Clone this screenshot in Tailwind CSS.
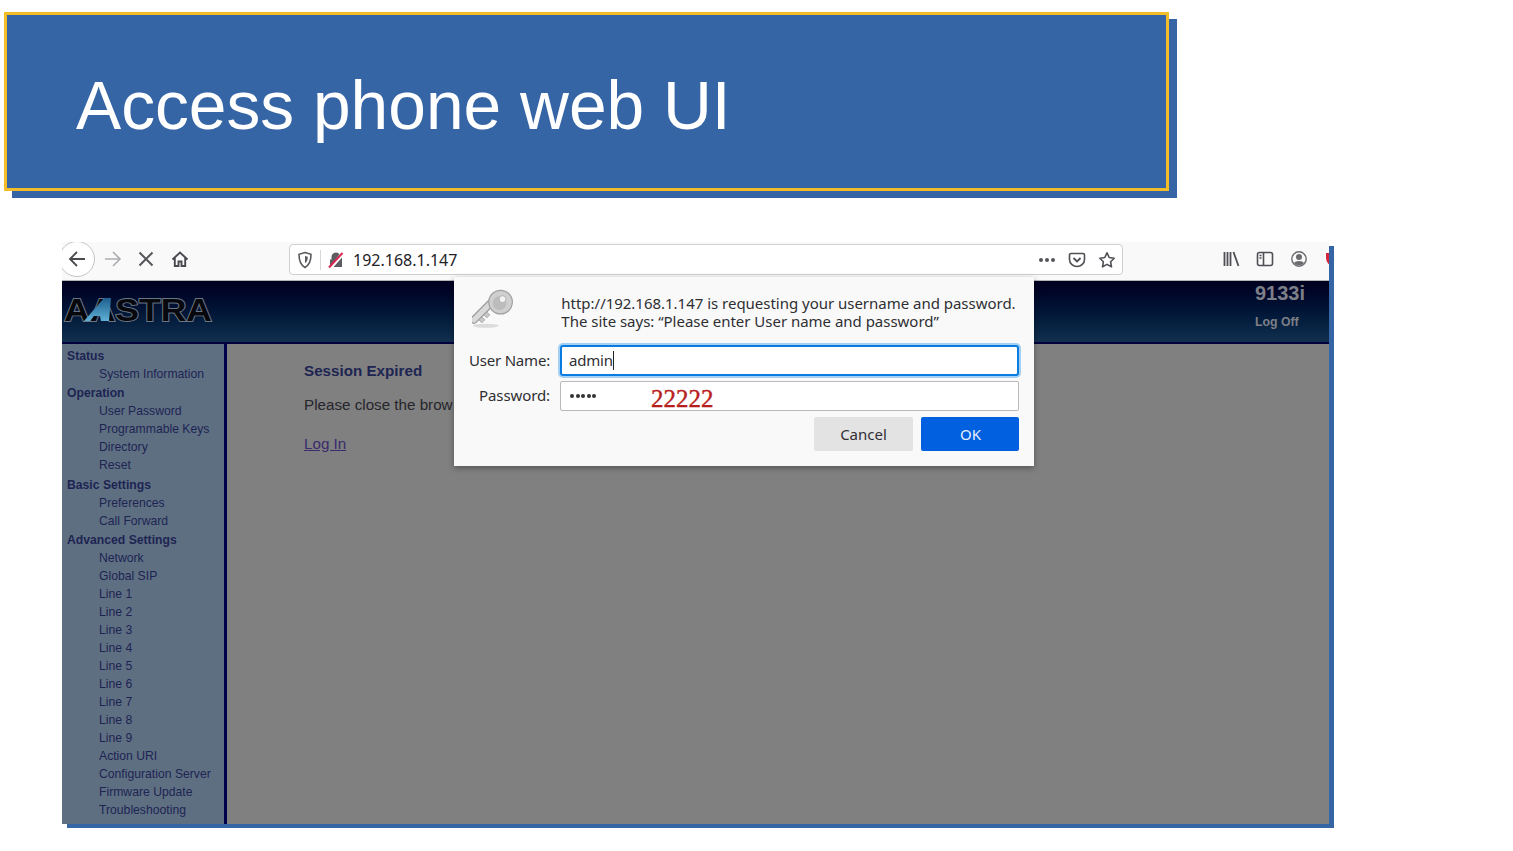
<!DOCTYPE html>
<html lang="en"><head><meta charset="utf-8">
<script src="https://cdn.jsdelivr.net/npm/@tailwindcss/browser@4"></script>
</head>
<body class="bg-white overflow-hidden font-['Liberation_Sans',sans-serif]">
<div class="w-[1513px] h-[851px] pt-3 pl-1">
  <header class="w-[1165px] h-[179px] bg-[#3565a5] border-[3px] border-[#f3bd2a] shadow-[8px_7px_0_#3565a5] pl-[69px] flex items-center">
    <h1 class="text-[67.7px] leading-none text-white font-normal mt-[8px]">Access phone web UI</h1>
  </header>
  <section class="relative w-[1267px] h-[582px] ml-[58px] mt-[51px] shadow-[5px_4px_0_#3565a5] flex flex-col">
    <div class="h-[39px] bg-[#f9f9fa] border-b border-[#b5b5b8] flex items-center relative overflow-hidden shrink-0 pb-[4px]">
      <div class="absolute left-[-3px] top-[-1px] w-9 h-9 rounded-full border border-[#c4c4c6] bg-white flex items-center justify-center">
        <svg width="20" height="20" viewBox="0 0 20 20" fill="none" stroke="#4a4a4f" stroke-width="1.8"><path d="M18 10H3M10 3l-7 7 7 7"/></svg>
      </div>
      <svg class="ml-[41px]" width="20" height="20" viewBox="0 0 20 20" fill="none" stroke="#adadb0" stroke-width="1.6"><path d="M2 10h15M10 3l7 7-7 7"/></svg>
      <svg class="ml-[14px]" width="18" height="18" viewBox="0 0 18 18" fill="none" stroke="#55555a" stroke-width="2"><path d="M2.500 2.500l13 13M15.500 2.500l-13 13"/></svg>
      <svg class="ml-[16px]" width="18" height="18" viewBox="0 0 18 18" fill="none" stroke="#4a4a4f" stroke-width="1.900"><path d="M1.500 9.500L9 2.500l7.500 7M3.800 8v8h3.700v-4.500h3V16h3.700V8"/></svg>
      <div class="absolute left-[227px] top-[2px] w-[834px] h-[31px] bg-white border border-[#cfcfd2] rounded-[4px] flex items-center pl-[7px] pr-[6px]">
        <svg width="16" height="18" viewBox="0 0 16 18" fill="none" stroke="#5a5a5f" stroke-width="1.600"><path d="M8 1.500l6 1.800c0 6-1 10.500-6 13.200C3 13.800 2 9.300 2 3.300z"/><path d="M8 5l2.800.8c0 3-.6 5-2.800 6.400z" fill="#5a5a5f" stroke="none"/></svg>
        <div class="w-px h-[20px] bg-[#d8d8da] ml-[7px]"></div>
        <svg class="ml-[6px]" width="18" height="18" viewBox="0 0 18 18" fill="none"><path d="M3 16V8.500h1.500V6a4.500 4.500 0 0 1 8-2.800L3 16zM6.500 16l8.500-9.500V16z" fill="#5c5c61"/><path d="M2 16.500L15.500 2" stroke="#d7264f" stroke-width="2"/></svg>
        <span class="ml-[8px] text-[16px] text-[#222226] font-['Noto_Sans',sans-serif]">192.168.1.147</span>
        <div class="ml-auto flex items-center">
          <span class="flex gap-[2px]"><i class="w-[4px] h-[4px] rounded-full bg-[#55555a]"></i><i class="w-[4px] h-[4px] rounded-full bg-[#55555a]"></i><i class="w-[4px] h-[4px] rounded-full bg-[#55555a]"></i></span>
          <svg class="ml-[13px]" width="18" height="18" viewBox="0 0 18 18" fill="none" stroke="#4f4f54" stroke-width="1.600"><path d="M3 2.500h12a1.500 1.500 0 0 1 1.500 1.500v4.500a7.500 7 0 0 1-15 0V4A1.500 1.500 0 0 1 3 2.500z"/><path d="M5.500 7L9 10.500 12.500 7" stroke-width="1.900"/></svg>
          <svg class="ml-[12px]" width="18" height="18" viewBox="0 0 18 18" fill="none" stroke="#4f4f54" stroke-width="1.600"><path d="M9 1.800l2.200 4.700 5 .7-3.600 3.500.9 5.100L9 13.400l-4.500 2.400.9-5.100L1.800 7.200l5-.7z" stroke-linejoin="round"/></svg>
        </div>
      </div>
      <div class="absolute right-0 top-0 h-full w-[112px] flex items-center pb-[4px] overflow-hidden">
        <svg class="ml-[5px] shrink-0" width="18" height="18" viewBox="0 0 18 18" fill="none" stroke="#4f4f54" stroke-width="1.800"><path d="M2.500 2v14M5.500 2v14M8.500 2v14M11.500 2l5 14"/></svg>
        <svg class="ml-[16px] shrink-0" width="18" height="18" viewBox="0 0 18 18" fill="none" stroke="#4f4f54" stroke-width="1.600"><rect x="1.500" y="2.500" width="15" height="13" rx="2"/><path d="M7.500 2.500v13M3.500 5.500h2M3.500 8h2" /></svg>
        <svg class="ml-[16px] shrink-0" width="18" height="18" viewBox="0 0 18 18"><circle cx="9" cy="9" r="7.200" fill="none" stroke="#6a6a6f" stroke-width="1.400"/><circle cx="9" cy="7" r="3" fill="#6a6a6f"/><path d="M3.800 13a6 4 0 0 1 10.400 0A7 7 0 0 1 3.800 13z" fill="#6a6a6f"/></svg>
        <div class="ml-[18px] w-[8px] h-[13px] rounded-l-[3px] rounded-bl-full bg-[#d5243b] shrink-0"></div>
      </div>
    </div>
    <div class="h-[63px] shrink-0 bg-gradient-to-b from-[#00001f] to-[#12304f] border-b-2 border-[#00003f] flex justify-between relative">
      <svg class="mt-[14px] ml-[1px]" width="156" height="38" viewBox="0 0 156 38">
        <defs><linearGradient id="sw" x1="0" y1="0" x2="0" y2="1"><stop offset="0" stop-color="#1d5f8f"/><stop offset="1" stop-color="#5fb0d6"/></linearGradient></defs>
        <text x="1" y="26" font-family="Liberation Sans" font-weight="700" font-size="31" textLength="148" lengthAdjust="spacingAndGlyphs" fill="#07080d" stroke="#6b7684" stroke-width="1.800" paint-order="stroke">AASTRA</text>
        <path d="M21 26L41 3h7L46 26H38L37 21H31L27 26z" fill="url(#sw)"/>
      </svg>
      <div class="w-[74px] text-[#7d7f88] font-bold">
        <div class="text-[20px] leading-[24px]">9133i</div>
        <div class="text-[12.300px] mt-[11px] leading-none">Log Off</div>
      </div>
    </div>
    <div class="flex-1 flex min-h-0">
      <nav class="w-[165px] bg-[#5f6f82] border-r-[3px] border-r-[#00004a] pl-[5px] pt-[3px] text-[12.200px] leading-[18px] text-[#1d2452] shrink-0">
        <div class="font-bold">Status</div>
        <div class="pl-8">System Information</div>
        <div class="font-bold mt-px">Operation</div>
        <div class="pl-8">User Password</div>
        <div class="pl-8">Programmable Keys</div>
        <div class="pl-8">Directory</div>
        <div class="pl-8">Reset</div>
        <div class="font-bold mt-[2px]">Basic Settings</div>
        <div class="pl-8">Preferences</div>
        <div class="pl-8">Call Forward</div>
        <div class="font-bold mt-px">Advanced Settings</div>
        <div class="pl-8">Network</div>
        <div class="pl-8">Global SIP</div>
        <div class="pl-8">Line 1</div>
        <div class="pl-8">Line 2</div>
        <div class="pl-8">Line 3</div>
        <div class="pl-8">Line 4</div>
        <div class="pl-8">Line 5</div>
        <div class="pl-8">Line 6</div>
        <div class="pl-8">Line 7</div>
        <div class="pl-8">Line 8</div>
        <div class="pl-8">Line 9</div>
        <div class="pl-8">Action URI</div>
        <div class="pl-8">Configuration Server</div>
        <div class="pl-8">Firmware Update</div>
        <div class="pl-8">Troubleshooting</div>
      </nav>
      <main class="flex-1 bg-[#808080] pl-[77px] pt-[17px]">
        <h2 class="text-[15.200px] leading-[20px] font-bold text-[#1d2452]">Session Expired</h2>
        <p class="w-[150px] overflow-hidden whitespace-nowrap text-[15.200px] leading-[20px] mt-[14px] text-[#25252b]">Please close the brow</p>
        <a class="block text-[15.200px] leading-[20px] mt-[19px] underline text-[#3a2a6e]">Log In</a>
      </main>
    </div>
    <div class="absolute left-[392px] top-[35px] w-[580px] h-[189px] bg-[#f9f9f9] shadow-[0_2px_6px_rgba(0,0,0,0.35)] font-['Noto_Sans',sans-serif] text-[#2f2f33]">
      <div class="flex pl-[18px] pt-[11px] h-[68px]">
        <svg width="44" height="42" viewBox="0 0 44 42">
          <ellipse cx="14" cy="38" rx="13" ry="2" fill="#dcdcdc"/>
          <path d="M2 32L19 15" stroke="#9c9c9c" stroke-width="8" stroke-linecap="round"/>
          <path d="M2 32L19 15" stroke="#d9d9d9" stroke-width="5.500" stroke-linecap="round"/>
          <path d="M7 32l3 3 3-3-3-3zM12 27l3 3 3-3-3-3z" fill="#c8c8c8" stroke="#9c9c9c" stroke-width="0.800"/>
          <circle cx="29" cy="14" r="12" fill="#cfcfcf" stroke="#a0a0a0" stroke-width="1.200"/>
          <circle cx="28" cy="15" r="7" fill="#bcbcbc"/>
          <circle cx="31" cy="11" r="3.500" fill="#f2f2f2" stroke="#a8a8a8" stroke-width="0.800"/>
        </svg>
        <div class="ml-[46px] mt-[6px] text-[15px] leading-[18px] w-[480px] tracking-[-0.02px] whitespace-nowrap"><div>http://192.168.1.147 is requesting your username and password.</div><div>The site says: “Please enter User name and password”</div></div>
      </div>
      <div class="flex items-center h-[31px]">
        <label class="w-[96px] text-right text-[15px] tracking-[-0.2px]">User Name:</label>
        <div class="ml-[10px] w-[459px] h-[31px] bg-white border-2 border-[#0a7ce0] rounded-[3px] shadow-[0_0_0_2px_#a3d0f5] pl-[7px] flex items-center text-[15px] tracking-[-0.2px]">admin<span class="w-px h-[19px] bg-[#222]"></span></div>
      </div>
      <div class="flex items-center mt-[5px] h-[30px]">
        <label class="w-[96px] text-right text-[15px] tracking-[-0.1px] mt-[-2px]">Password:</label>
        <div class="ml-[10px] w-[459px] h-[30px] bg-white border border-[#b9b9bb] rounded-[2px] pl-[9px] flex items-center">
          <span class="flex gap-[1.500px] mt-[-1px]"><i class="w-[4px] h-[4px] rounded-full bg-[#333]"></i><i class="w-[4px] h-[4px] rounded-full bg-[#333]"></i><i class="w-[4px] h-[4px] rounded-full bg-[#333]"></i><i class="w-[4px] h-[4px] rounded-full bg-[#333]"></i><i class="w-[4px] h-[4px] rounded-full bg-[#333]"></i></span>
          <span class="ml-[55px] mt-[5px] text-[25px] font-['Liberation_Serif',serif] text-[#b81d1d] [-webkit-text-stroke:0.4px_#b81d1d]">22222</span>
        </div>
      </div>
      <div class="flex justify-end gap-[8px] mt-[6px] pr-[15px]">
        <button class="w-[99px] h-[34px] bg-[#e3e3e3] rounded-[2px] text-[15px]">Cancel</button>
        <button class="w-[98px] h-[34px] bg-[#0060df] rounded-[2px] text-[15px] text-[#e6effb] pl-px">OK</button>
      </div>
    </div>
  </section>
</div>
</body></html>
